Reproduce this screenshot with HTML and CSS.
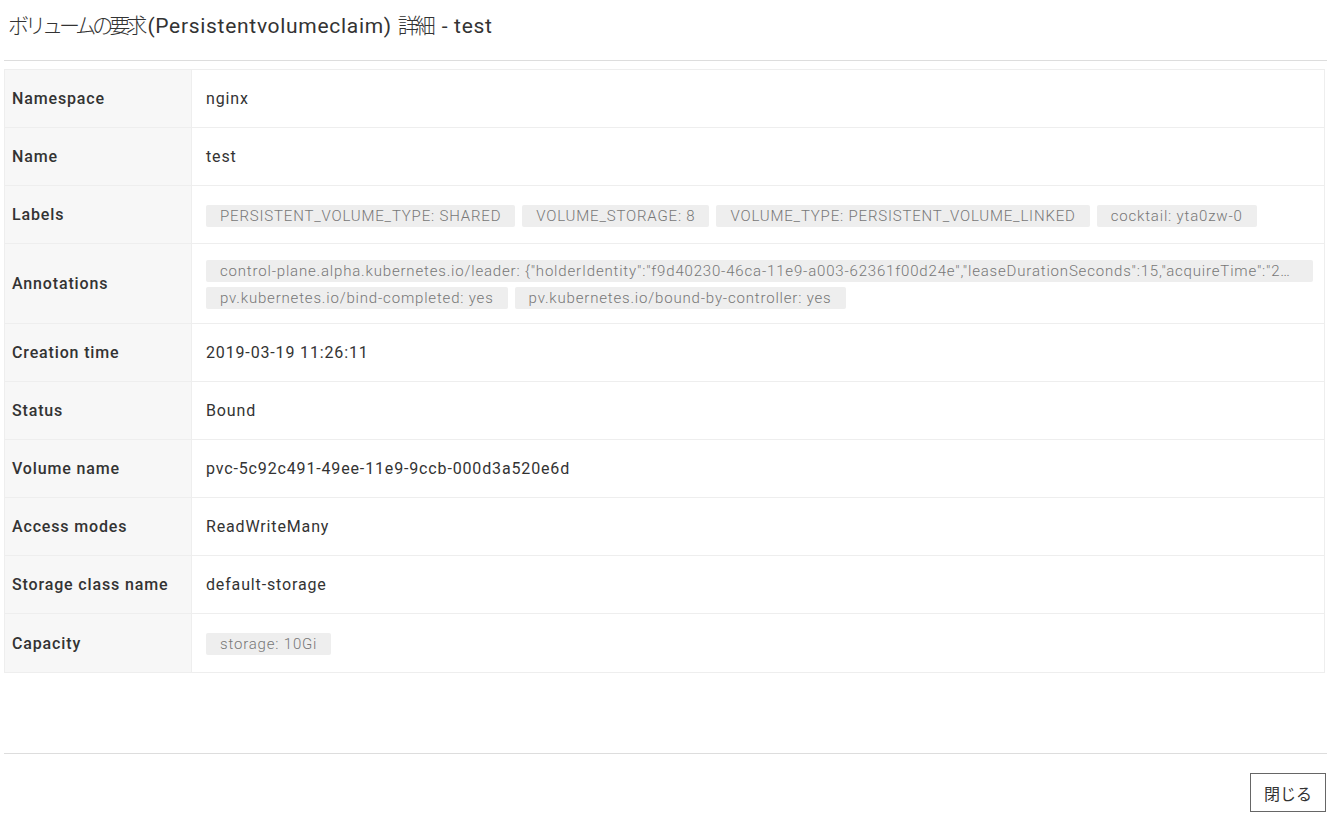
FILE: index.html
```html
<!DOCTYPE html>
<html lang="ja">
<head>
<meta charset="utf-8">
<link rel="stylesheet" href="styles.css">
</head>
<body>
<div class="modal">
  <div class="modal-header">
    <h1 class="modal-title"><span class="ja">ボリュームの要求</span>(Persistentvolumeclaim) <span class="ja">詳細</span> - test</h1>
  </div>
  <div class="modal-body">
    <div class="detail">
      <div class="row"><div class="key">Namespace</div><div class="val">nginx</div></div>
      <div class="row"><div class="key">Name</div><div class="val">test</div></div>
      <div class="row"><div class="key">Labels</div><div class="val tags">
        <span class="tag">PERSISTENT_VOLUME_TYPE: SHARED</span>
        <span class="tag">VOLUME_STORAGE: 8</span>
        <span class="tag">VOLUME_TYPE: PERSISTENT_VOLUME_LINKED</span>
        <span class="tag">cocktail: yta0zw-0</span>
      </div></div>
      <div class="row row-tall"><div class="key">Annotations</div><div class="val tags">
        <span class="tag tag-long">control-plane.alpha.kubernetes.io/leader: {"holderIdentity":"f9d40230-46ca-11e9-a003-62361f00d24e","leaseDurationSeconds":15,"acquireTime":"2019-03-19T02:26:11Z","renewTime":"2019-03-19T02:26:13Z","leaderTransitions":0}</span>
        <span class="tag">pv.kubernetes.io/bind-completed: yes</span>
        <span class="tag">pv.kubernetes.io/bound-by-controller: yes</span>
      </div></div>
      <div class="row"><div class="key">Creation time</div><div class="val">2019-03-19 11:26:11</div></div>
      <div class="row"><div class="key">Status</div><div class="val">Bound</div></div>
      <div class="row"><div class="key">Volume name</div><div class="val">pvc-5c92c491-49ee-11e9-9ccb-000d3a520e6d</div></div>
      <div class="row"><div class="key">Access modes</div><div class="val">ReadWriteMany</div></div>
      <div class="row"><div class="key">Storage class name</div><div class="val">default-storage</div></div>
      <div class="row"><div class="key">Capacity</div><div class="val tags"><span class="tag">storage: 10Gi</span></div></div>
    </div>
  </div>
  <div class="modal-footer">
    <button class="btn" type="button">閉じる</button>
  </div>
</div>
</body>
</html>
```
FILE: styles.css
```css
* { box-sizing: border-box; }
html, body { margin: 0; padding: 0; background: #fff; }
body {
  font-family: Roboto, "Noto Sans CJK JP", sans-serif;
  color: #333;
  font-size: 16px;
  letter-spacing: 0.85px;
}
.modal { width: 1333px; }
.modal-header {
  margin: 0 6px 0 4px;
  padding: 13px 0 21px 4px;
  border-bottom: 1px solid #ddd;
}
.modal-title {
  margin: 0;
  font-size: 21px;
  font-weight: 400;
  line-height: 26px;
  letter-spacing: 0.7px;
  color: #333;
}
.modal-title .ja {
  letter-spacing: -4px;
  font-weight: 300;
  margin-right: 4px;
}
.modal-body {
  padding: 8px 8px 0 4px;
}
.detail {
  border: 1px solid #eee;
}
.row {
  display: flex;
  min-height: 58px;
  border-bottom: 1px solid #eee;
}
.row:last-child { border-bottom: none; }
.row-tall { min-height: 80px; }
.key {
  flex: 0 0 187px;
  background: #f7f7f7;
  border-right: 1px solid #eee;
  padding: 0 0 0 7px;
  display: flex;
  align-items: center;
  font-weight: 500;
  color: #333;
}
.val {
  flex: 1 1 auto;
  min-width: 0;
  padding: 0 11px 0 14px;
  display: flex;
  align-items: center;
  color: #333;
}
.tags {
  flex-wrap: wrap;
  align-content: center;
  gap: 5px 7px;
  padding-top: 2px;
}
.tag {
  display: inline-block;
  background: #eee;
  color: #777;
  font-size: 15px;
  font-weight: 300;
  letter-spacing: 0.82px;
  line-height: 22px;
  height: 22px;
  padding: 0 14px;
  border-radius: 2px;
  white-space: nowrap;
  max-width: 100%;
  overflow: hidden;
  text-overflow: ellipsis;
}
.modal-footer {
  margin: 80px 6px 0 4px;
  border-top: 1px solid #ddd;
  padding: 19px 1px 0 0;
  display: flex;
  justify-content: flex-end;
}
.btn {
  font-family: Roboto, "Noto Sans CJK JP", sans-serif;
  font-size: 16px;
  color: #333;
  background: #fff;
  border: 1px solid #666;
  border-radius: 0;
  width: 76px;
  height: 39px;
  padding: 0;
}
```
